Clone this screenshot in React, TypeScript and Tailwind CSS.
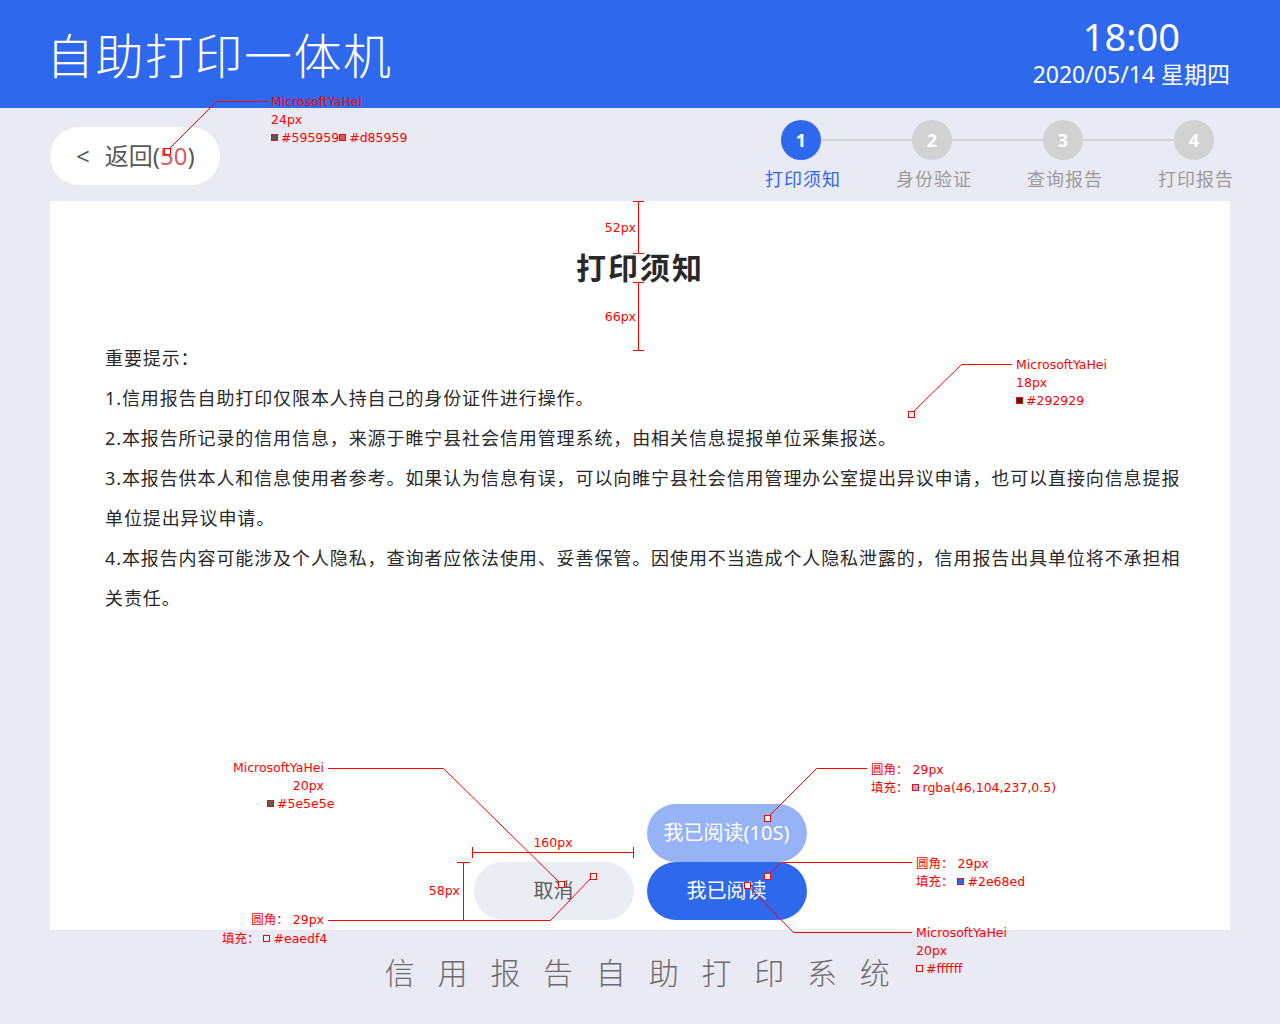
import React from "react";

const RED = "#ff0000";

function Sq({ color }: { color: string }) {
  return <span className="inline-block w-[7px] h-[7px] border border-[#ff0000] mr-[3px] align-middle relative top-[-1px]" style={{ background: color }} />;
}

function Ann({ left, right, top, children, center }: { left?: number; right?: number; top: number; children: React.ReactNode; center?: boolean }) {
  const style: React.CSSProperties = { top };
  if (left !== undefined) style.left = left;
  if (right !== undefined) style.right = right;
  return (
    <div
      className={`absolute whitespace-nowrap text-[12.5px] leading-[18px] text-[#ff0000] font-['DejaVu_Sans','Noto_Sans_CJK_SC',sans-serif] ${center ? "-translate-x-1/2" : ""}`}
      style={style}
    >
      {children}
    </div>
  );
}

const bodyLines = [
  "重要提示：",
  "1.信用报告自助打印仅限本人持自己的身份证件进行操作。",
  "2.本报告所记录的信用信息，来源于睢宁县社会信用管理系统，由相关信息提报单位采集报送。",
  "3.本报告供本人和信息使用者参考。如果认为信息有误，可以向睢宁县社会信用管理办公室提出异议申请，也可以直接向信息提报",
  "单位提出异议申请。",
  "4.本报告内容可能涉及个人隐私，查询者应依法使用、妥善保管。因使用不当造成个人隐私泄露的，信用报告出具单位将不承担相",
  "关责任。",
];

const steps = ["打印须知", "身份验证", "查询报告", "打印报告"];

export default function App() {
  return (
    <div className="relative w-[1280px] h-[1024px] overflow-hidden bg-[#eaeaf4] font-['Noto_Sans','Noto_Sans_CJK_SC',sans-serif]">
      {/* Header */}
      <div className="h-[108px] bg-[#2e68ed] flex justify-between pl-[46px] pr-[50px]">
        <div className="pt-[34px] text-[48px] leading-[44px] font-light tracking-[1.5px] text-white">自助打印一体机</div>
        <div className="flex flex-col items-center pt-[17px] text-white">
          <div className="text-[38px] leading-[38px]">18:00</div>
          <div className="text-[23px] leading-[23px] mt-[8px]">2020/05/14 星期四</div>
        </div>
      </div>

      {/* Nav row */}
      <div className="h-[93px] flex justify-between items-start px-[50px]">
        <div className="mt-[19px] w-[170px] h-[58px] rounded-full bg-white flex items-center pl-[26px] text-[24px] text-[#595959]">
          <span className="mr-[15px]">&lt;</span>
          <span>
            返回(<span className="text-[#d85959]">50</span>)
          </span>
        </div>
        <div className="mt-[12px] mr-[-4px] flex flex-col items-start">
          <div className="flex items-center ml-[16px]">
            {steps.map((_, i) => (
              <React.Fragment key={i}>
                {i > 0 && <div className="w-[91px] h-[2px] bg-[#d4d4d4]" />}
                <div
                  className={`w-[40px] h-[40px] rounded-full flex items-center justify-center text-white text-[18px] font-bold ${
                    i === 0 ? "bg-[#2e68ed]" : "bg-[#d2d2d2]"
                  }`}
                >
                  {i + 1}
                </div>
              </React.Fragment>
            ))}
          </div>
          <div className="flex gap-[55px] mt-[8px]">
            {steps.map((s, i) => (
              <div
                key={s}
                className={`w-[76px] text-center text-[18px] leading-[22px] tracking-[1px] whitespace-nowrap ${
                  i === 0 ? "text-[#2e68ed]" : "text-[#9a9a9a]"
                }`}
              >
                {s}
              </div>
            ))}
          </div>
        </div>
      </div>

      {/* Content panel */}
      <div className="mx-[50px] h-[729px] bg-white flex flex-col px-[55px]">
        <div className="pt-[52px] text-center text-[30px] leading-[30px] font-bold tracking-[2px] text-[#292929]">打印须知</div>
        <div className="mt-[55px] text-[18px] leading-[40px] tracking-[0.9px] text-[#292929]">
          {bodyLines.map((l) => (
            <div key={l} className="whitespace-nowrap">
              {l}
            </div>
          ))}
        </div>
        <div className="mt-auto pb-[10px] flex justify-center items-end gap-[13px]">
          <button className="w-[160px] h-[58px] rounded-[29px] bg-[#eaedf4] text-[20px] text-[#5e5e5e]">取消</button>
          <div className="flex flex-col">
            <button className="w-[160px] h-[58px] rounded-[29px] bg-[rgba(46,104,237,0.5)] text-[20px] text-white">我已阅读(10S)</button>
            <button className="w-[160px] h-[58px] rounded-[29px] bg-[#2e68ed] text-[20px] text-white">我已阅读</button>
          </div>
        </div>
      </div>

      {/* Footer */}
      <div className="h-[94px] flex items-center justify-center pb-[10px] pl-[2px] text-[30px] font-light tracking-[7.5px] text-[#6b6b6b]">
        信 用 报 告 自 助 打 印 系 统
      </div>

      {/* Annotation overlay */}
      <svg className="absolute left-0 top-0 pointer-events-none" width="1280" height="1024" viewBox="0 0 1280 1024">
        <g stroke={RED} strokeWidth="1" fill="none">
          <polyline points="267.5,101.5 216.5,101.5 169,149" />
          <polyline points="1012,364.5 961.5,364.5 913,412" />
          <polyline points="328,768.5 443.5,768.5 559,882" />
          <polyline points="328,920.5 550.5,920.5 591,878" />
          <polyline points="867,768.5 816.5,768.5 769,816" />
          <polyline points="912,862.5 781.5,862.5 769,874" />
          <polyline points="912,932.5 793.5,932.5 749,887" />
          <line x1="638.5" y1="201" x2="638.5" y2="253" />
          <line x1="633" y1="201.5" x2="644" y2="201.5" />
          <line x1="633" y1="253.5" x2="644" y2="253.5" />
          <line x1="638.5" y1="282" x2="638.5" y2="350" />
          <line x1="633" y1="282.5" x2="644" y2="282.5" />
          <line x1="633" y1="350.5" x2="644" y2="350.5" />
          <line x1="472" y1="852.5" x2="633" y2="852.5" />
          <line x1="472.5" y1="847" x2="472.5" y2="858" />
          <line x1="633.5" y1="847" x2="633.5" y2="858" />
          <line x1="463.5" y1="862" x2="463.5" y2="920" />
          <line x1="457" y1="862.5" x2="470" y2="862.5" />
        </g>
        <g stroke={RED} strokeWidth="1" fill="#ffffff">
          <rect x="164.5" y="148.5" width="6" height="6" />
          <rect x="908.5" y="411.5" width="6" height="6" />
          <rect x="558.5" y="881.5" width="6" height="6" />
          <rect x="590.5" y="873.5" width="6" height="6" />
          <rect x="764.5" y="815.5" width="6" height="6" />
          <rect x="764.5" y="873.5" width="6" height="6" />
          <rect x="744.5" y="882.5" width="6" height="6" />
        </g>
      </svg>

      <Ann left={271} top={93}>MicrosoftYaHei</Ann>
      <Ann left={271} top={111}>24px</Ann>
      <Ann left={271} top={129}>
        <Sq color="#595959" />#595959<Sq color="#d85959" />#d85959
      </Ann>

      <Ann left={1016} top={356}>MicrosoftYaHei</Ann>
      <Ann left={1016} top={374}>18px</Ann>
      <Ann left={1016} top={392}>
        <Sq color="#292929" />#292929
      </Ann>

      <Ann right={1280 - 636} top={219}>52px</Ann>
      <Ann right={1280 - 636} top={308}>66px</Ann>
      <Ann left={553} top={834} center>160px</Ann>
      <Ann right={1280 - 460} top={882}>58px</Ann>

      <Ann right={1280 - 324} top={759}>MicrosoftYaHei</Ann>
      <Ann right={1280 - 324} top={777}>20px</Ann>
      <Ann left={267} top={795}>
        <Sq color="#5e5e5e" />#5e5e5e
      </Ann>
      <Ann right={1280 - 324} top={911}>圆角： 29px</Ann>
      <Ann left={222} top={930}>
        填充： <Sq color="#eaedf4" />#eaedf4
      </Ann>

      <Ann left={871} top={761}>圆角： 29px</Ann>
      <Ann left={871} top={779}>
        填充： <Sq color="rgba(46,104,237,0.5)" />rgba(46,104,237,0.5)
      </Ann>
      <Ann left={916} top={855}>圆角： 29px</Ann>
      <Ann left={916} top={873}>
        填充： <Sq color="#2e68ed" />#2e68ed
      </Ann>
      <Ann left={916} top={924}>MicrosoftYaHei</Ann>
      <Ann left={916} top={942}>20px</Ann>
      <Ann left={916} top={960}>
        <Sq color="#ffffff" />#ffffff
      </Ann>
    </div>
  );
}
